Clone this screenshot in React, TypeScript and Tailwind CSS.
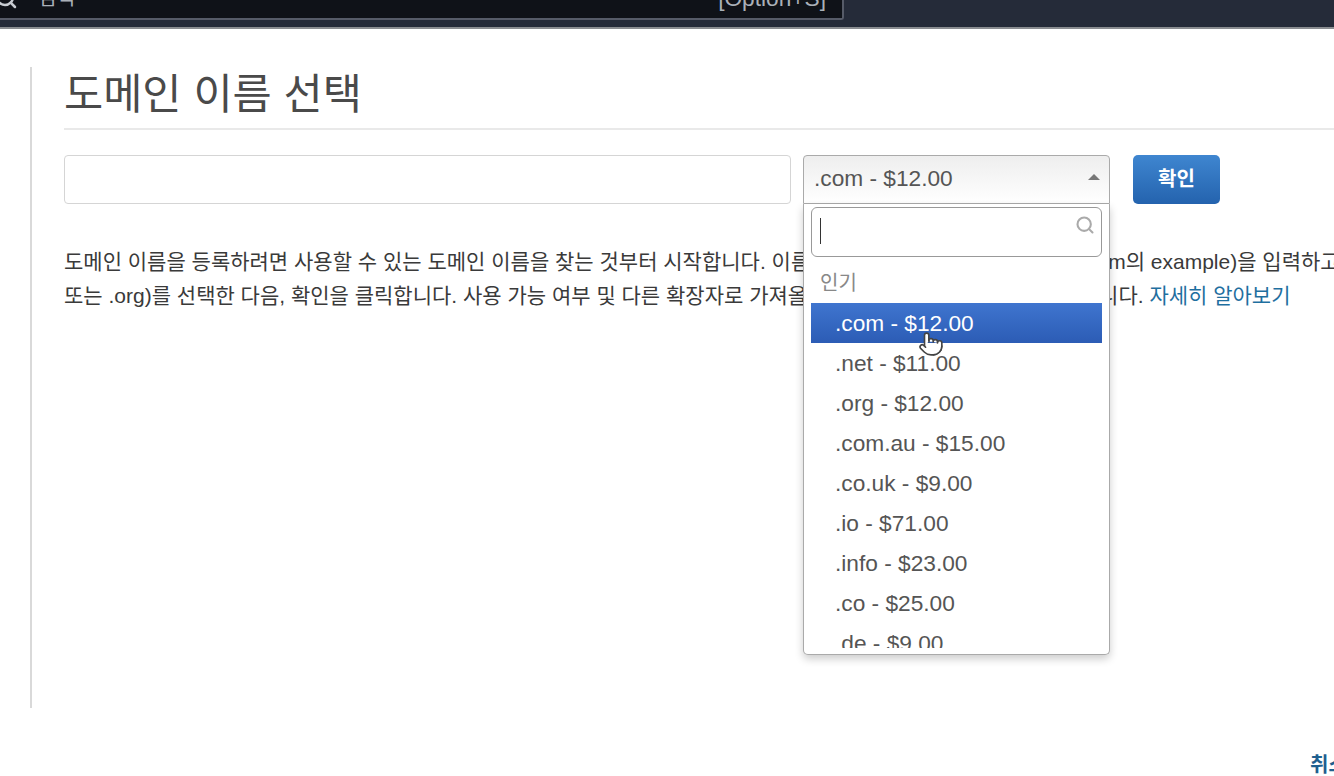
import { Search, Pointer } from "lucide-react";

const rows = [".net - $11.00", ".org - $12.00", ".com.au - $15.00", ".co.uk - $9.00", ".io - $71.00", ".info - $23.00", ".co - $25.00", ".de - $9.00"];

export default function App() {
  return (
    <div className="relative h-[776px] w-[1334px] overflow-hidden bg-white font-['Liberation_Sans','Noto_Sans_CJK_KR',sans-serif]">
      <header className="h-[29px] overflow-hidden border-b-2 border-[#8a8d91] bg-[#252b39]">
        <div className="mt-[-22px] flex h-[42px] w-[844px] items-center justify-between rounded-br-[3px] border-r-2 border-b-2 border-[#565b68] bg-[#0f1218] pr-[16px] pl-0 leading-[24px] text-[#aab0b8]">
          <div className="flex items-center">
            <Search className="h-6 w-6 -ml-[6px] text-[#c8ccd2]" strokeWidth={2.5} />
            <span className="ml-[20px] text-[20px]">검색</span>
          </div>
          <span className="text-[22.7px]">[Option+S]</span>
        </div>
      </header>

      <main className="mt-[38px] ml-[30px] h-[641px] border-l-2 border-[#d9d9d9] pl-[32px]">
        <h1 className="h-[61px] text-[42.6px] leading-[54px] text-[#4a4a4a]">도메인 이름 선택</h1>
        <div className="h-[2px] bg-[#e9e9e9]" />
        <div className="mt-[25px] flex items-start">
          <div className="h-[49px] w-[727px] rounded-[4px] border border-[#d5d5d5] bg-white" />
          <div className="ml-[12px] flex h-[49px] w-[307px] items-center justify-between rounded-t-[4px] border border-[#aaaaaa] bg-gradient-to-b from-[#eeeeee] to-white pr-[9px] pb-[2px] pl-[10px] text-[22.7px] text-[#555555]">
            <span>.com - $12.00</span>
            <span className="mb-[4px] h-0 w-0 border-x-[6px] border-b-[6px] border-x-transparent border-b-[#777777]" />
          </div>
          <button className="ml-[23px] h-[49px] w-[87px] rounded-[5px] bg-gradient-to-b from-[#3f86d0] to-[#2463ae] pb-[2px] text-[20px] font-bold text-white">확인</button>
        </div>
        <div className="mt-[41px] whitespace-nowrap text-[21px] leading-[34px] text-[#3a3a3a]">
          <p>도메인 이름을 등록하려면 사용할 수 있는 도메인 이름을 찾는 것부터 시작합니다. 이름의 맨앞부분(예: www.example.com의 example)을 입력하고 확장자(예: .com</p>
          <p>또는 .org)를 선택한 다음, 확인을 클릭합니다. 사용 가능 여부 및 다른 확장자로 가져올 수 있는지와, 그 가격 등을 확인합니다. <a className="text-[#1f6f9f]">자세히 알아보기</a></p>
        </div>
      </main>

      <div className="absolute top-[204px] left-[803px] flex h-[451px] w-[307px] flex-col rounded-b-[5px] border border-t-0 border-[#aaaaaa] bg-white px-[7px] pt-[3px] pb-[6px] shadow-[0_4px_8px_rgba(0,0,0,0.2)]">
        <div className="flex h-[50px] shrink-0 items-start justify-between rounded-[6px] border border-[#999999] pt-[7px] pr-[6px] pl-[8px]">
          <span className="mt-[3px] h-[26px] w-px bg-[#333333]" />
          <Search className="h-5 w-5 text-[#aaaaaa]" strokeWidth={2.5} />
        </div>
        <div className="flex h-[46px] shrink-0 items-center pt-[6px] pl-[9px] text-[20px] text-[#888888]">인기</div>
        <div className="min-h-0 flex-1 overflow-hidden">
          <div className="flex h-[40px] items-center bg-gradient-to-b from-[#3f75cf] to-[#2c5cb5] pl-[24px] text-[22.7px] text-white">.com - $12.00</div>
          {rows.map((r) => (
            <div key={r} className="flex h-[40px] items-center pl-[24px] text-[22.7px] text-[#555555]">{r}</div>
          ))}
        </div>
      </div>

      <Pointer className="absolute top-[331px] left-[918px] h-[26px] w-[26px] fill-white text-[#444444]" strokeWidth={1.5} />

      <a className="absolute top-[750px] left-[1310px] whitespace-nowrap text-[20px] font-bold text-[#1f5f8f]">취소</a>
    </div>
  );
}
